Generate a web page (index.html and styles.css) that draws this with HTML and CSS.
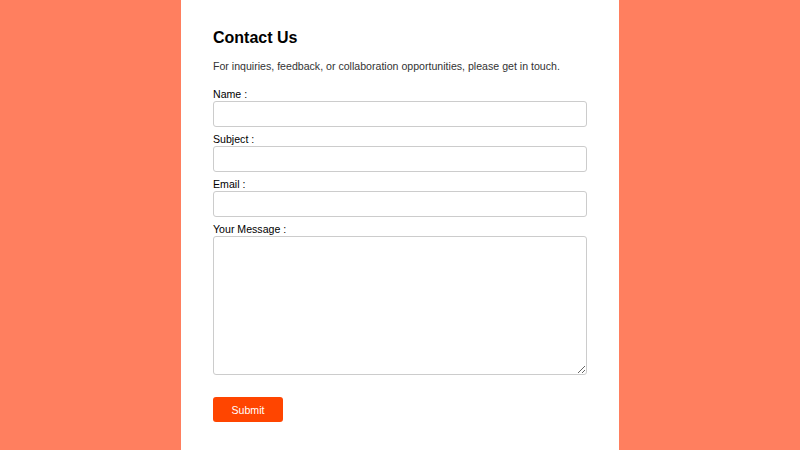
FILE: index.html
```html
<!DOCTYPE html>
<html lang="en">
<head>
<meta charset="utf-8">
<title>Contact Us</title>
<link rel="stylesheet" href="styles.css">
</head>
<body>
<main class="card">
  <h2 class="title">Contact Us</h2>
  <p class="intro">For inquiries, feedback, or collaboration opportunities, please get in touch.</p>
  <form class="form">
    <label class="label" for="name">Name :</label>
    <input class="field" id="name" type="text">
    <label class="label" for="subject">Subject :</label>
    <input class="field" id="subject" type="text">
    <label class="label" for="email">Email :</label>
    <input class="field" id="email" type="email">
    <label class="label" for="message">Your Message :</label>
    <textarea class="field area" id="message"></textarea>
    <button class="submit" type="button">Submit</button>
  </form>
</main>
</body>
</html>
```
FILE: styles.css
```css
html, body {
  margin: 0;
  padding: 0;
}
body {
  background: #ff7f5f;
  font-family: "Liberation Sans", Arial, sans-serif;
  color: #000;
  height: 450px;
  overflow: hidden;
}
.card {
  width: 374px;
  margin: 0 auto;
  background: #fff;
  padding: 28px 32px 40px;
  min-height: 400px;
}
.title {
  margin: 0;
  font-size: 16px;
  line-height: 19px;
  font-weight: 700;
}
.intro {
  margin: 12px 0 14px;
  font-size: 10.6px;
  line-height: 14px;
  color: #333;
}
.form {
  display: flex;
  flex-direction: column;
}
.label {
  font-size: 10.6px;
  line-height: 14px;
}
.field {
  box-sizing: border-box;
  width: 374px;
  height: 26px;
  border: 1px solid #ccc;
  border-radius: 3px;
  margin: 0 0 5px;
  padding: 4px;
  font-family: inherit;
  background: #fff;
}
.area {
  height: 139px;
  resize: vertical;
  margin-bottom: 22px;
}
.submit {
  align-self: flex-start;
  width: 70px;
  height: 25px;
  padding: 0;
  background: #ff4500;
  color: #fff;
  border: none;
  border-radius: 3px;
  font-family: inherit;
  font-size: 10.6px;
}
```
